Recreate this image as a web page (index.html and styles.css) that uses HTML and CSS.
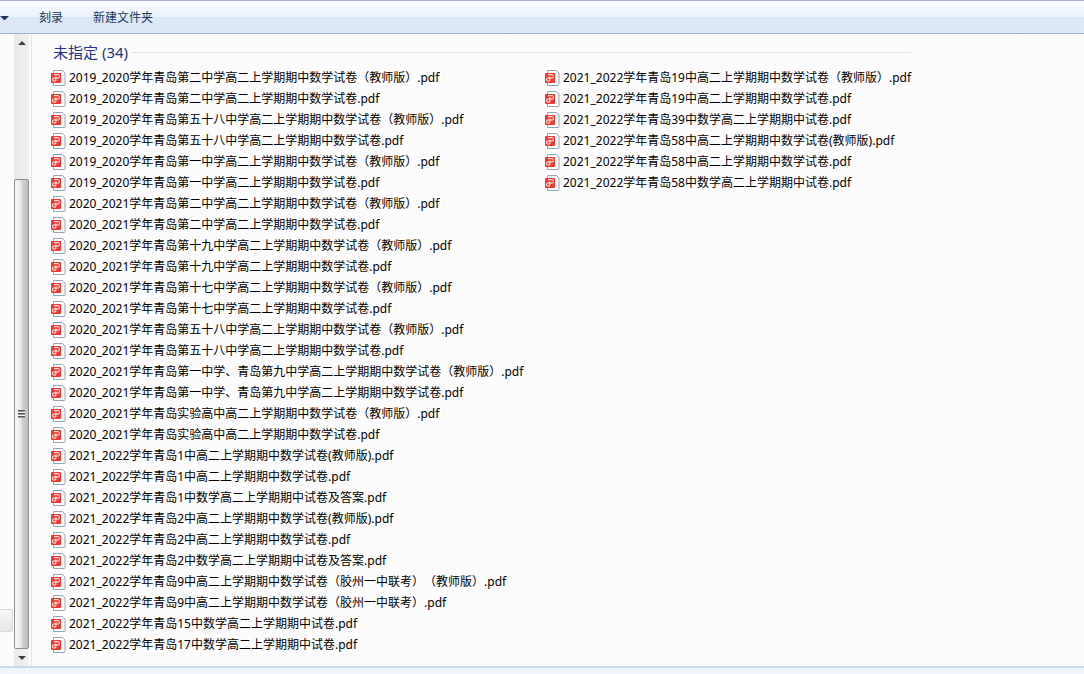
FILE: index.html
```html
<!DOCTYPE html>
<html lang="zh-CN">
<head>
    <meta charset="UTF-8">
    <meta name="viewport" content="width=device-width, initial-scale=1.0">
    <title>未指定</title>
    <link rel="stylesheet" href="styles.css">
</head>
<body>
    <header class="toolbar">
        <button class="menu-arrow" aria-label="menu"></button>
        <button class="tool-btn">刻录</button>
        <button class="tool-btn">新建文件夹</button>
    </header>

    <div class="main">
        <div class="nav-pane"><div class="nav-item"></div></div>
        <div class="scrollbar">
            <button class="scroll-btn up" aria-label="up"></button>
            <div class="track"></div>
            <div class="thumb"><span class="grip"></span></div>
            <button class="scroll-btn down" aria-label="down"></button>
        </div>
        <main class="files">
            <h1 class="group-title">未指定 (34)</h1>
            <ul class="file-list" id="fileList"></ul>
        </main>
    </div>

    <footer class="details"></footer>

    <script src="script.js"></script>
</body>
</html>
```
FILE: styles.css
```css
:root {
    --page-bg: #fcfcfc;
    --toolbar-text: #1e395b;
    --group-text: #1e3287;
    --row-height: 21px;
}

* {
    box-sizing: border-box;
}

body {
    margin: 0;
    min-height: 100vh;
    display: flex;
    flex-direction: column;
    font-family: "Noto Sans", "Noto Sans CJK SC", sans-serif;
    font-size: 12px;
    text-spacing-trim: space-all;
    color: #000;
    background: var(--page-bg);
}

button {
    padding: 0;
    border: none;
    background: none;
    font: inherit;
}

/* Toolbar */
.toolbar {
    display: flex;
    align-items: center;
    gap: 30px;
    height: 34px;
    padding-top: 2px;
    border-top: 1px solid #a5b3cc;
    border-bottom: 1px solid #a0afc9;
    background: linear-gradient(#fafcff, #e9f2fb 50%, #dce6f4 50%, #dde9f7);
}

.menu-arrow {
    width: 9px;
    border: 4px solid transparent;
    border-top-color: var(--toolbar-text);
    border-bottom: none;
}

.tool-btn {
    line-height: 20px;
    color: var(--toolbar-text);
}

/* Left pane and its scrollbar */
.main {
    flex: 1;
    display: flex;
}

.nav-pane {
    width: 14px;
    display: flex;
    flex-direction: column;
    justify-content: flex-end;
    padding-bottom: 34px;
}

.nav-item {
    width: 13px;
    height: 23px;
    border: 1px solid #d9d9d9;
    border-left: none;
    border-radius: 0 3px 3px 0;
    background: linear-gradient(#f8f8f8, #e5e5e5);
}

.scrollbar {
    display: flex;
    flex-direction: column;
    width: 18px;
    padding-right: 2px;
    border-right: 1px solid #d6e5f5;
    background: linear-gradient(90deg, #e9e9e9, #f1f1f1 15px, var(--page-bg) 15px);
}

.scroll-btn {
    height: 17px;
    display: flex;
    align-items: center;
    justify-content: center;
}

.scroll-btn::before {
    content: '';
    border: 4px solid transparent;
}

.up::before {
    border-top: none;
    border-bottom-color: #404040;
}

.down::before {
    border-bottom: none;
    border-top-color: #404040;
}

.track {
    flex: 128;
}

.thumb {
    flex: 470;
    display: flex;
    align-items: center;
    justify-content: center;
    border: 1px solid #8f8f8f;
    border-radius: 2px;
    background: linear-gradient(90deg, #fafafa, #e9e9e9 45%, #d2d2d6 55%, #bcbcc2);
}

.grip {
    width: 7px;
    height: 8px;
    background: repeating-linear-gradient(#555 0 1px, #999 1px 2px, #eee 2px 3px);
}

/* File group */
.files {
    flex: 1;
    min-width: 0;
    padding: 8px 0 11px 18px;
}

.group-title {
    display: flex;
    align-items: center;
    gap: 4px;
    max-width: 861px;
    margin: 0;
    padding: 0 0 5px 3px;
    font-size: 15px;
    font-weight: 400;
    line-height: 20px;
    color: var(--group-text);
}

.group-title::after {
    content: '';
    flex: 1;
    height: 1px;
    background: #e2e2e2;
}

.file-list {
    display: grid;
    grid-template-rows: repeat(28, var(--row-height));
    grid-auto-flow: column;
    grid-auto-columns: 494px;
    margin: 0;
    padding: 0;
    list-style: none;
}

.file {
    display: flex;
    align-items: center;
    gap: 3px;
    line-height: var(--row-height);
    white-space: nowrap;
}

.file-icon {
    flex: none;
    width: 16px;
    height: 16px;
}

/* Bottom pane */
.details {
    height: 8px;
    border-top: 2px solid #c9d8ec;
    background: #f0f5fc;
}
```
FILE: script.js
```js
const files = [
    '2019_2020学年青岛第二中学高二上学期期中数学试卷（教师版）',
    '2019_2020学年青岛第二中学高二上学期期中数学试卷',
    '2019_2020学年青岛第五十八中学高二上学期期中数学试卷（教师版）',
    '2019_2020学年青岛第五十八中学高二上学期期中数学试卷',
    '2019_2020学年青岛第一中学高二上学期期中数学试卷（教师版）',
    '2019_2020学年青岛第一中学高二上学期期中数学试卷',
    '2020_2021学年青岛第二中学高二上学期期中数学试卷（教师版）',
    '2020_2021学年青岛第二中学高二上学期期中数学试卷',
    '2020_2021学年青岛第十九中学高二上学期期中数学试卷（教师版）',
    '2020_2021学年青岛第十九中学高二上学期期中数学试卷',
    '2020_2021学年青岛第十七中学高二上学期期中数学试卷（教师版）',
    '2020_2021学年青岛第十七中学高二上学期期中数学试卷',
    '2020_2021学年青岛第五十八中学高二上学期期中数学试卷（教师版）',
    '2020_2021学年青岛第五十八中学高二上学期期中数学试卷',
    '2020_2021学年青岛第一中学、青岛第九中学高二上学期期中数学试卷（教师版）',
    '2020_2021学年青岛第一中学、青岛第九中学高二上学期期中数学试卷',
    '2020_2021学年青岛实验高中高二上学期期中数学试卷（教师版）',
    '2020_2021学年青岛实验高中高二上学期期中数学试卷',
    '2021_2022学年青岛1中高二上学期期中数学试卷(教师版)',
    '2021_2022学年青岛1中高二上学期期中数学试卷',
    '2021_2022学年青岛1中数学高二上学期期中试卷及答案',
    '2021_2022学年青岛2中高二上学期期中数学试卷(教师版)',
    '2021_2022学年青岛2中高二上学期期中数学试卷',
    '2021_2022学年青岛2中数学高二上学期期中试卷及答案',
    '2021_2022学年青岛9中高二上学期期中数学试卷（胶州一中联考）（教师版）',
    '2021_2022学年青岛9中高二上学期期中数学试卷（胶州一中联考）',
    '2021_2022学年青岛15中数学高二上学期期中试卷',
    '2021_2022学年青岛17中数学高二上学期期中试卷',
    '2021_2022学年青岛19中高二上学期期中数学试卷（教师版）',
    '2021_2022学年青岛19中高二上学期期中数学试卷',
    '2021_2022学年青岛39中数学高二上学期期中试卷',
    '2021_2022学年青岛58中高二上学期期中数学试卷(教师版)',
    '2021_2022学年青岛58中高二上学期期中数学试卷',
    '2021_2022学年青岛58中数学高二上学期期中试卷'
];

// White page with a cut corner, red badge on top
const icon = `<svg class="file-icon" viewBox="0 0 16 16" aria-hidden="true">
    <path d="M3.5 .5h9l2.500 2.500v11.500a1 1 0 0 1-1 1H3.500z" fill="#fff" stroke="#98a2b3"/>
    <rect x="1" y="3" width="10" height="10" rx="1" fill="#ec3a31"/>
    <path d="M4 4.700h4.500a.8 .8 0 0 1 .8 .8v1.700a.8 .8 0 0 1-.8 .8H3.300a.6 .6 0 0 0-.6 .6v1.800a.6 .6 0 0 0 .6 .6h2.500V6.500" fill="none" stroke="#fff"/>
</svg>`;

document.getElementById('fileList').innerHTML = files
    .map(name => `<li class="file">${icon}<span>${name}.pdf</span></li>`)
    .join('');
```
